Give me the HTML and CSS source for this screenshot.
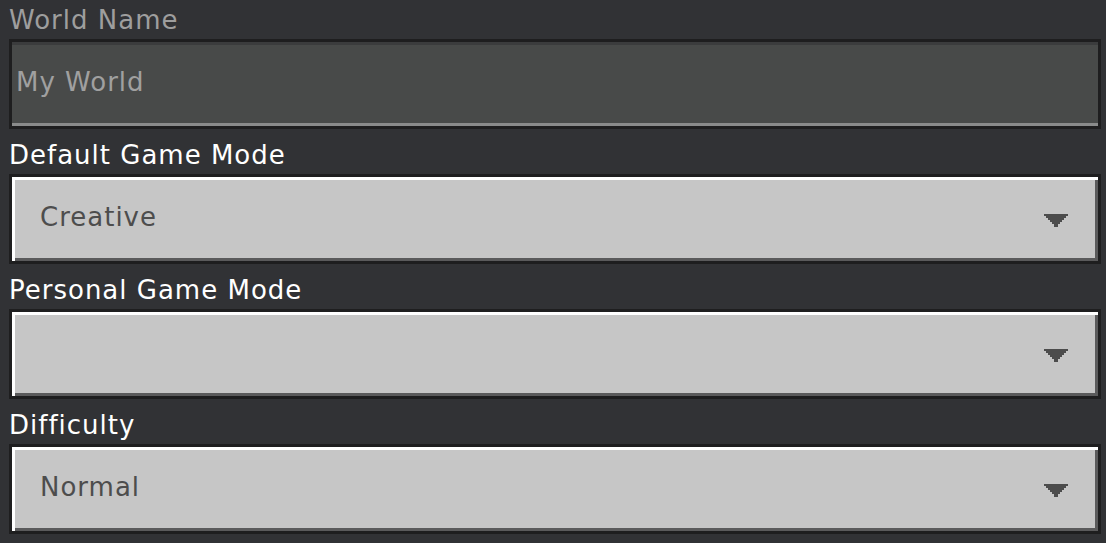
FILE: index.html
```html
<!DOCTYPE html>
<html lang="en">
<head>
<meta charset="utf-8">
<title>World Settings</title>
<link rel="stylesheet" href="styles.css">
</head>
<body>
<main class="form">
  <section class="group">
    <div class="label label-disabled">World Name</div>
    <div class="textfield"><span class="value value-disabled">My World</span></div>
  </section>
  <section class="group">
    <div class="label">Default Game Mode</div>
    <div class="dropdown">
      <span class="value">Creative</span>
      <svg class="arrow" width="24" height="13" viewBox="0 0 24 13" shape-rendering="crispEdges"><path d="M0 0H24V2H22V4H20V6H18V8H16V10H14V13H10V10H8V8H6V6H4V4H2V2H0Z"/></svg>
    </div>
  </section>
  <section class="group">
    <div class="label">Personal Game Mode</div>
    <div class="dropdown">
      <span class="value"></span>
      <svg class="arrow" width="24" height="13" viewBox="0 0 24 13" shape-rendering="crispEdges"><path d="M0 0H24V2H22V4H20V6H18V8H16V10H14V13H10V10H8V8H6V6H4V4H2V2H0Z"/></svg>
    </div>
  </section>
  <section class="group">
    <div class="label">Difficulty</div>
    <div class="dropdown">
      <span class="value">Normal</span>
      <svg class="arrow" width="24" height="13" viewBox="0 0 24 13" shape-rendering="crispEdges"><path d="M0 0H24V2H22V4H20V6H18V8H16V10H14V13H10V10H8V8H6V6H4V4H2V2H0Z"/></svg>
    </div>
  </section>
</main>
</body>
</html>
```

FILE: styles.css
```css
html, body {
  margin: 0;
  padding: 0;
  background: #313235;
  overflow: hidden;
}

body {
  width: 1106px;
  height: 543px;
  box-sizing: border-box;
  padding: 5px 5px 0 9px;
  font-family: "DejaVu Sans", "Liberation Sans", sans-serif;
  font-size: 26px;
  letter-spacing: 1px;
}

.form {
  display: flex;
  flex-direction: column;
  gap: 11px;
}

.group {
  display: flex;
  flex-direction: column;
}

.label {
  line-height: 30px;
  height: 30px;
  margin-bottom: 4px;
  color: #ffffff;
  white-space: nowrap;
}

.label-disabled {
  color: #9e9e9e;
}

.textfield,
.dropdown {
  box-sizing: border-box;
  height: 90px;
  border: 3px solid #1e1e1f;
  display: flex;
  align-items: center;
}

.textfield {
  background: #484a49;
  box-shadow: inset 0 3px 0 #3b3c3d, inset 0 -3px 0 #8a8b8b;
  padding-left: 4px;
}

.dropdown {
  background: #c6c6c6;
  box-shadow: inset 3px 3px 0 #ffffff, inset -3px -3px 0 #5a5a5b;
  padding-left: 28px;
  padding-right: 30px;
}

.value {
  line-height: 30px;
  min-height: 30px;
  margin-bottom: 4px;
  color: #4d4d4d;
  white-space: nowrap;
}

.value-disabled {
  color: #a0a0a0;
}

.arrow {
  margin-left: auto;
  margin-top: 3px;
  fill: #4c4c4c;
  flex: none;
}
```
